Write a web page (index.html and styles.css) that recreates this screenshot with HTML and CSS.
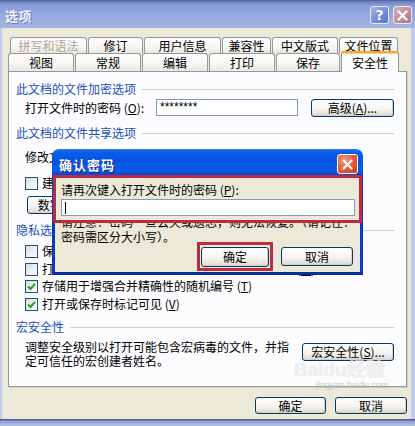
FILE: index.html
```html
<!DOCTYPE html>
<html lang="zh-CN">
<head>
  <meta charset="UTF-8">
  <title>选项</title>
  <link rel="stylesheet" href="styles.css">
</head>
<body>
  <div class="window">
    <div class="titlebar">
      <span class="title">选项</span>
      <span class="tb-btns">
        <span class="tb-btn help">?</span>
        <span class="tb-btn close">
          <svg width="11" height="11" viewBox="0 0 11 11"><path d="M1.5 1.5 L9.5 9.5 M9.5 1.5 L1.5 9.5" stroke="#fff" stroke-width="2.2" stroke-linecap="round"/></svg>
        </span>
      </span>
    </div>

    <div class="client">
      <div class="tabs back">
        <span class="tab disabled">拼写和语法</span>
        <span class="tab">修订</span>
        <span class="tab">用户信息</span>
        <span class="tab">兼容性</span>
        <span class="tab">中文版式</span>
        <span class="tab">文件位置</span>
      </div>
      <div class="tabs front">
        <span class="tab">视图</span>
        <span class="tab">常规</span>
        <span class="tab">编辑</span>
        <span class="tab">打印</span>
        <span class="tab">保存</span>
        <span class="tab active">安全性</span>
      </div>

      <div class="panel">
        <div class="group-head h1"><span>此文档的文件加密选项</span><i></i></div>
        <div class="row pw">
          <span class="label">打开文件时的密码 (<u>O</u>):</span>
          <span class="field">********</span>
          <span class="btn adv">高级(<u>A</u>)...</span>
        </div>

        <div class="group-head h2"><span>此文档的文件共享选项</span><i></i></div>
        <div class="row modify">
          <span class="label">修改文件时的密码 (<u>M</u>):</span>
          <span class="field"></span>
        </div>
        <div class="row cb cb-ro"><span class="box"></span>建议以只读方式打开文档 (<u>E</u>)</div>
        <div class="row sign"><span class="btn">数字签名(<u>D</u>)...</span></div>

        <div class="group-head h3"><span>隐私选项</span><i></i></div>
        <div class="row cb cb1"><span class="box"></span>保存时从文件属性中删除个人信息 (<u>R</u>)</div>
        <div class="row cb cb2"><span class="box"></span>打印、保存或发送包含修订的文件之前给出警告 (<u>W</u>)</div>
        <div class="row cb cb3"><span class="box checked"><svg width="9" height="9" viewBox="0 0 9 9"><path d="M1 4.5 L3.5 7 L8 1.8" fill="none" stroke="#21a121" stroke-width="2"/></svg></span>存储用于增强合并精确性的随机编号 (<u>T</u>)</div>
        <div class="row cb cb4"><span class="box checked"><svg width="9" height="9" viewBox="0 0 9 9"><path d="M1 4.5 L3.5 7 L8 1.8" fill="none" stroke="#21a121" stroke-width="2"/></svg></span>打开或保存时标记可见 (<u>V</u>)</div>

        <div class="group-head h4"><span>宏安全性</span><i></i></div>
        <div class="row macro">
          <p>调整安全级别以打开可能包含宏病毒的文件，并指定可信任的宏创建者姓名。</p>
          <span class="btn">宏安全性(<u>S</u>)...</span>
        </div>
      </div>

      <div class="footer">
        <span class="btn ok">确定</span>
        <span class="btn cancel">取消</span>
      </div>
    </div>
    <div class="frame-bottom"></div>

    <div class="watermark">Baidu经验<small>jingyan.baidu.com</small></div>

    <div class="dialog">
      <div class="dlg-title">
        <span class="dlg-name">确认密码</span>
        <span class="dlg-close">
          <svg width="11" height="11" viewBox="0 0 11 11"><path d="M1.5 1.5 L9.5 9.5 M9.5 1.5 L1.5 9.5" stroke="#fff" stroke-width="2.2" stroke-linecap="round"/></svg>
        </span>
      </div>
      <div class="dlg-body">
        <div class="mark entry">
          <div class="dlg-label">请再次键入打开文件时的密码 (<u>P</u>):</div>
          <div class="dlg-input"><span class="caret"></span></div>
        </div>
        <div class="note">请注意：密码一旦丢失或遗忘，则无法恢复。（请记住：<br>密码需区分大小写）。</div>
        <div class="dlg-buttons">
          <span class="mark okmark"><span class="btn dlg-ok">确定</span></span>
          <span class="btn dlg-cancel">取消</span>
        </div>
      </div>
    </div>
  </div>
</body>
</html>
```

FILE: styles.css
```css
* { box-sizing:border-box; }
body { margin:0; background:#fff; font-family:"Noto Sans CJK SC","Noto Sans",sans-serif; font-size:12px; color:#000; }
u { text-decoration:underline; text-underline-offset:1px; }

.window { position:relative; width:415px; height:426px; overflow:hidden; background:#ece9d8; }

/* inactive XP title bar */
.titlebar { height:28px; display:flex; align-items:center; justify-content:space-between; padding:2px 3px 0 5px; background:linear-gradient(#4c5f92 0, #7086c2 2px, #879cd6 5px, #94a7de 50%, #a6b6e4 100%); }
.title { color:#f0f4fc; font-weight:700; font-size:13px; letter-spacing:.5px; text-shadow:1px 1px 0 #6a7db4; }
.tb-btns { display:flex; gap:4px; }
.tb-btn { width:19px; height:18px; display:flex; align-items:center; justify-content:center; border:1px solid #e6ebf8; border-radius:3px; color:#fff; font:700 14px "DejaVu Sans",sans-serif; }
.tb-btn.help { background:linear-gradient(135deg,#9fb3ec,#6f8ad8 60%,#5e78c8); }
.tb-btn.close { background:linear-gradient(135deg,#dbb0bb,#c08995 60%,#b07484); }

.client { height:391px; padding:9px 4px 5px 6px; border-left:2px solid #bfcaee; border-right:4px solid #bfcaee; }
.frame-bottom { height:7px; background:linear-gradient(#4e5f93 0, #4e5f93 1px, #8c9dd0 2px, #b7c3ea 100%); }

/* tabs */
.tabs { display:flex; gap:1px; }
.tab { display:flex; align-items:center; justify-content:center; border:1px solid #919b9c; border-bottom:none; border-radius:3px 3px 0 0; background:linear-gradient(#fff, #f6f5f1 60%, #e9e8e1); line-height:14px; }
.tabs.back { height:16px; margin-left:2px; }
.tabs.front { height:18px; }
.tab.disabled { color:#aca899; }
.back .tab:nth-child(1) { width:77px; }
.back .tab:nth-child(2) { width:55px; }
.back .tab:nth-child(3) { width:77px; }
.back .tab:nth-child(4) { width:49px; }
.back .tab:nth-child(5) { width:66px; }
.back .tab:nth-child(6) { width:59px; }
.front .tab { width:66px; }
.front .tab:nth-child(5) { width:64px; }
.front .tab.active { width:58px; height:21px; margin-top:-2px; position:relative; z-index:1; background:#fcfcfe; border-top:2px solid #f2a73a; box-shadow:inset 0 1px 0 #ffd27a; }

.panel { height:316px; border:1px solid #919b9c; background:#fcfcfe; padding:0 12px 0 7px; box-shadow:1px 1px 0 #d5d2c5; }

.group-head { display:flex; align-items:center; gap:6px; height:16px; color:#1f4fbb; line-height:16px; }
.group-head i { flex:1; height:1px; background:#d0d0bf; }
.h1 { margin-top:9px; }
.h2 { margin-top:8px; }
.h3 { margin-top:8px; }
.h4 { margin-top:7px; }

.row { display:flex; align-items:center; padding-left:9px; line-height:16px; white-space:nowrap; }
.pw { height:19px; margin-top:1px; }
.row .label { width:131px; }
.field { width:142px; height:17px; border:1px solid #7f9db9; background:#fff; padding-left:3px; font:12px "Liberation Sans",sans-serif; line-height:15px; }
.adv { width:83px; height:18px; margin-left:13px; }
.modify { height:16px; margin-top:8px; }
.cb-ro { height:16px; margin-top:10px; }
.sign { height:18px; margin-top:5px; padding-left:11px; }
.sign .btn { width:96px; height:18px; }
.cb { height:16px; }
.cb1 { margin-top:5px; }
.cb2 { margin-top:2px; }
.cb3 { margin-top:1px; }
.cb4 { margin-top:2px; }
.box { width:13px; height:13px; margin-right:4px; border:1px solid #1c5180; background:linear-gradient(135deg,#dcdcd7,#fff); display:flex; align-items:center; justify-content:center; }
.macro { margin-top:5px; align-items:flex-start; justify-content:space-between; }
.macro p { margin:0; width:264px; white-space:normal; line-height:14px; }
.macro .btn { width:92px; height:18px; margin-top:3px; }

.footer { display:flex; justify-content:flex-end; gap:9px; margin-top:10px; }
.footer .ok { width:71px; height:17px; }
.footer .cancel { width:72px; height:17px; }

/* XP push button */
.btn { display:inline-flex; align-items:center; justify-content:center; border:1px solid #003c74; border-radius:3px; background:linear-gradient(#fff, #f5f4f0 55%, #e6e3da 85%, #d8d2c6); box-shadow:inset -1px -1px 0 #d6d0c5; line-height:1; white-space:nowrap; }

.watermark { position:absolute; left:294px; top:360px; color:rgba(255,255,255,.65); font:700 19px "Liberation Sans",sans-serif; line-height:20px; text-shadow:0 0 1px rgba(160,160,160,.45); }
.watermark small { display:block; font:9px "Liberation Sans",sans-serif; color:rgba(200,200,200,.55); padding-left:22px; }

/* active confirm dialog */
.dialog { position:absolute; left:52px; top:149px; width:311px; z-index:2; }
.dlg-title { height:26px; padding:4px 5px 0 7px; display:flex; align-items:center; justify-content:space-between; border-radius:7px 7px 0 0; background:linear-gradient(#2f7ef6 0, #0a5ee9 3px, #0553e2 45%, #0a5aea 80%, #0b47d3 100%); }
.dlg-name { color:#fff; font-weight:700; font-size:13px; letter-spacing:1px; text-shadow:1px 1px 0 #0b2a8a; }
.dlg-close { width:21px; height:20px; display:flex; align-items:center; justify-content:center; border:1px solid #fff; border-radius:3px; background:radial-gradient(circle at 35% 30%,#f19a7c,#e05a36 55%,#c23d1c); }
.dlg-body { background:#ece9d8; border:3px solid #0b3bc0; border-top:none; border-bottom-color:#0a2f9e; padding-bottom:1px; }

.mark { border:3px solid #bf2a3c; }
.entry { position:relative; z-index:1; margin:0 -2px; padding:4px 4px 4px 5px; background:#ece9d8; }
.dlg-label { height:16px; line-height:16px; margin-bottom:1px; }
.dlg-input { width:294px; height:17px; border:1px solid #7f9db9; background:#fff; display:flex; align-items:center; padding-left:3px; }
.caret { width:1px; height:12px; background:#000; }
.note { margin-top:-9px; padding-left:6px; line-height:15px; white-space:nowrap; }
.dlg-buttons { display:flex; justify-content:flex-end; align-items:center; gap:8px; padding-right:7px; margin-top:-2px; }
.okmark { display:flex; padding:2px 1px 1px; }
.dlg-ok { width:68px; height:20px; }
.dlg-cancel { width:72px; height:19px; }
```
